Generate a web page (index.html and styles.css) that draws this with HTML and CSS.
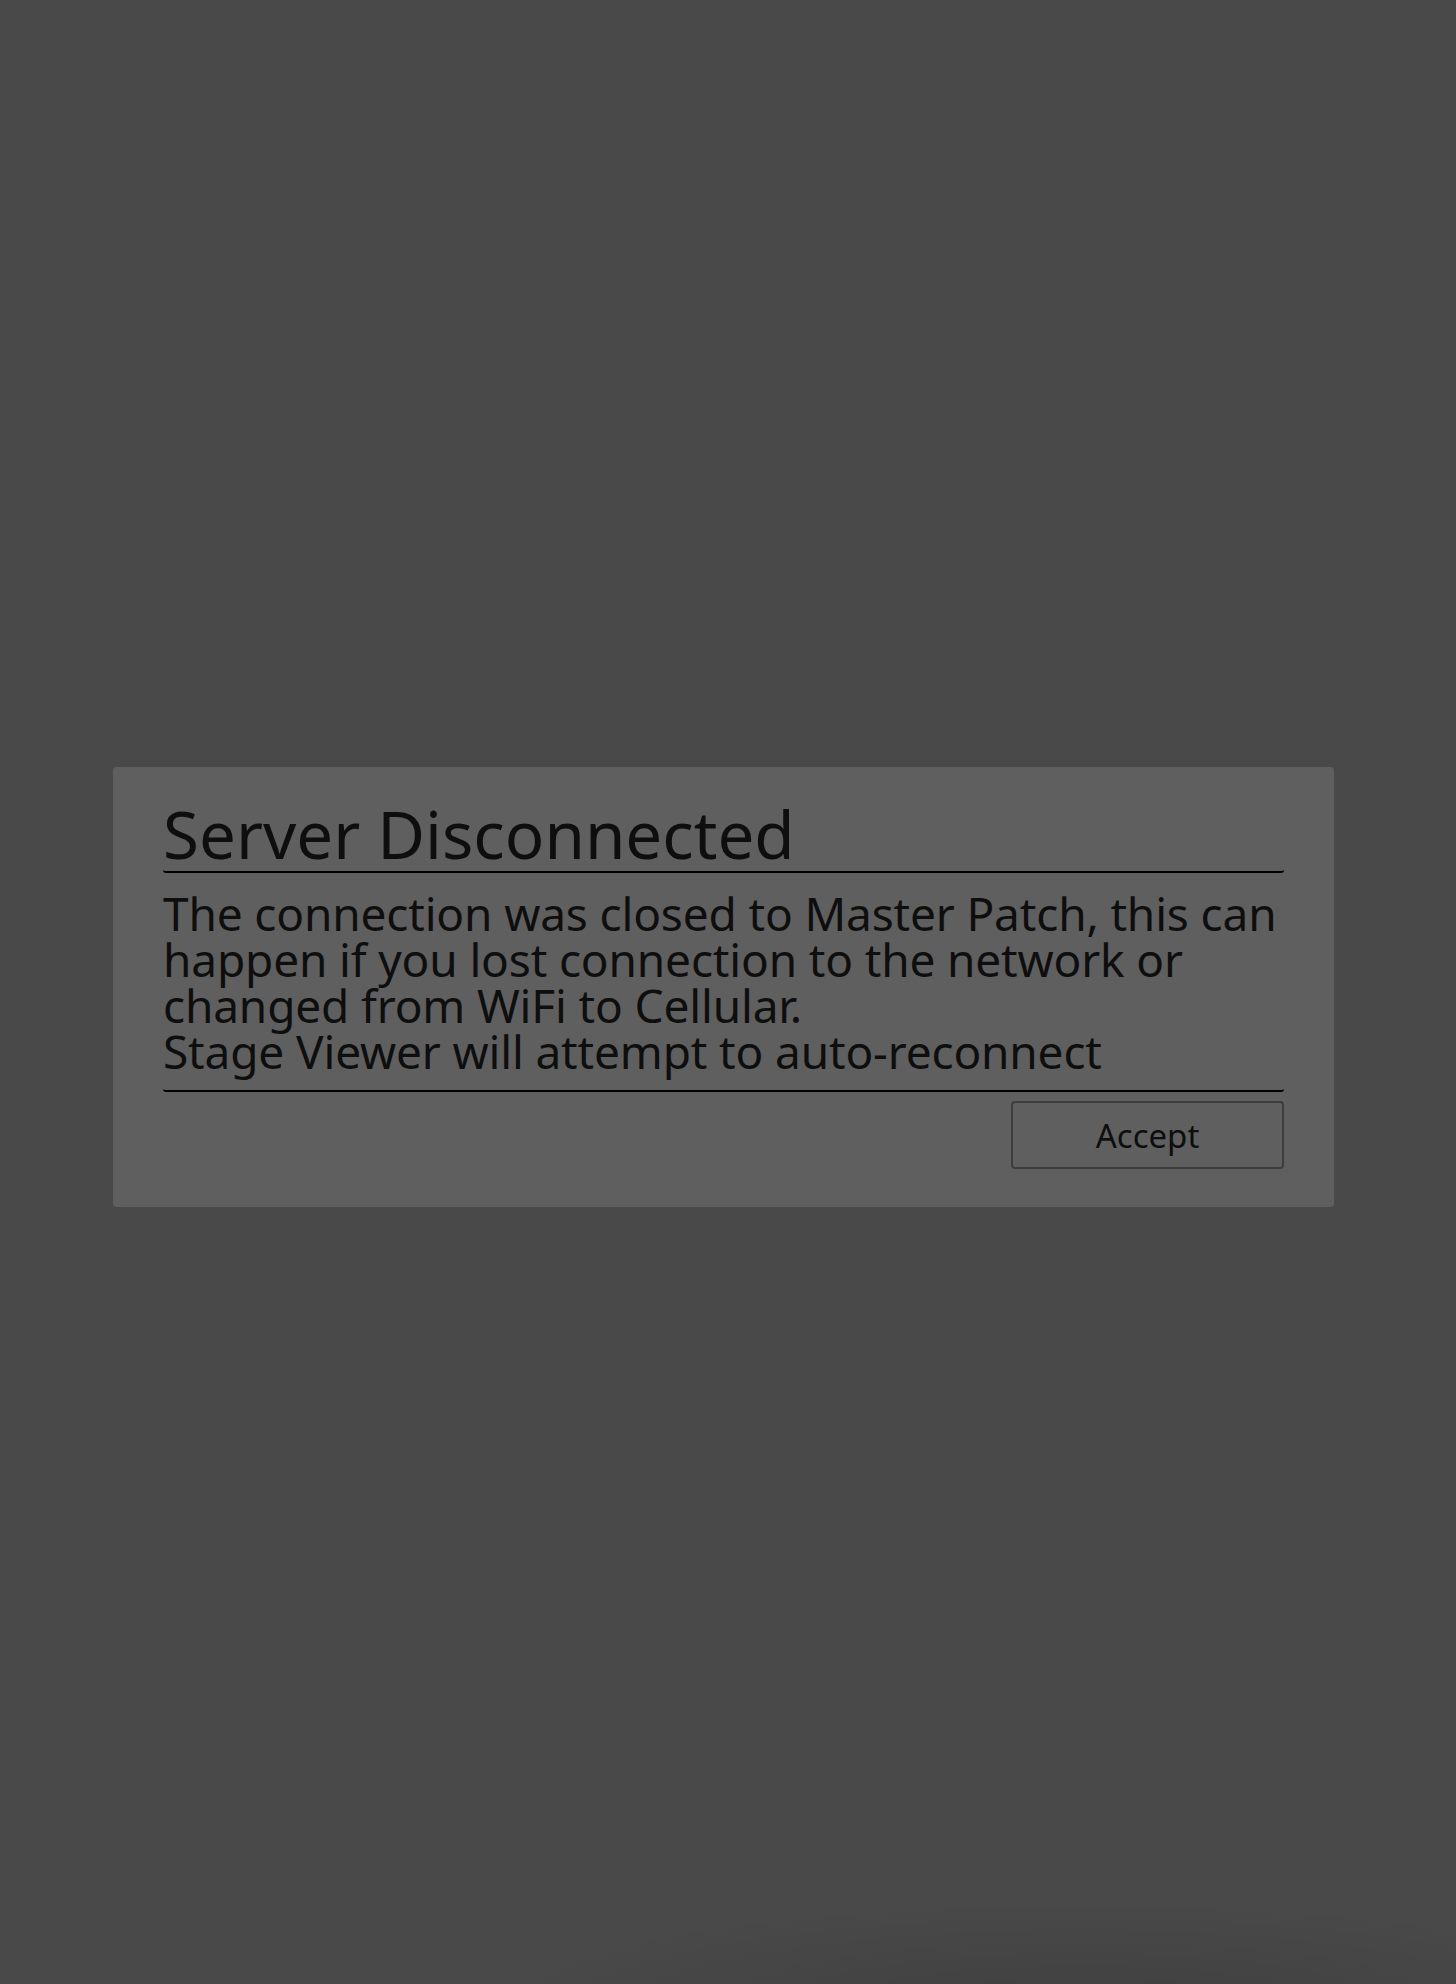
FILE: index.html
```html
<!DOCTYPE html>
<html lang="en">
<head>
<meta charset="utf-8">
<title>Stage Viewer</title>
<link rel="stylesheet" href="styles.css">
</head>
<body>
<div class="overlay">
  <div class="dialog" role="dialog" aria-labelledby="dlg-title">
    <h1 class="dialog-title" id="dlg-title">Server Disconnected</h1>
    <p class="dialog-body">The connection was closed to Master Patch, this can happen if you lost connection to the network or changed from WiFi to Cellular.<br>Stage Viewer will attempt to auto-reconnect</p>
    <div class="dialog-actions">
      <button class="btn" type="button">Accept</button>
    </div>
  </div>
</div>
</body>
</html>
```
FILE: styles.css
```css
html, body {
  margin: 0;
  padding: 0;
}
body {
  height: 1984px;
  overflow: hidden;
  background:
    radial-gradient(ellipse 620px 110px at 1080px 2010px, rgba(0, 0, 0, 0.13), rgba(0, 0, 0, 0) 100%),
    #494949;
  font-family: "Noto Sans", "DejaVu Sans", sans-serif;
  color: #0e0e0e;
}
.overlay {
  padding: 767px 0 0 113px;
}
.dialog {
  box-sizing: border-box;
  width: 1221px;
  height: 440px;
  padding: 34px 50px 0 50px;
  background: #5f5f5f;
  border-radius: 4px;
}
.dialog-title {
  margin: 0;
  font-size: 65.5px;
  font-weight: 400;
  line-height: 65px;
  padding-bottom: 5px;
  border-bottom: 2px solid #000;
  border-radius: 3px;
}
.dialog-body {
  margin: 17px 0 0 0;
  font-size: 46px;
  line-height: 46px;
  letter-spacing: -0.15px;
  padding-bottom: 16px;
  border-bottom: 2px solid #000;
  border-radius: 3px;
}
.dialog-actions {
  display: flex;
  justify-content: flex-end;
  margin-top: 9px;
}
.btn {
  box-sizing: border-box;
  width: 273px;
  height: 68px;
  background: transparent;
  border: 2px solid #3d3d3d;
  border-radius: 4px;
  font-family: "Noto Sans", "DejaVu Sans", sans-serif;
  font-size: 33px;
  color: #0e0e0e;
  padding: 0;
}
```
